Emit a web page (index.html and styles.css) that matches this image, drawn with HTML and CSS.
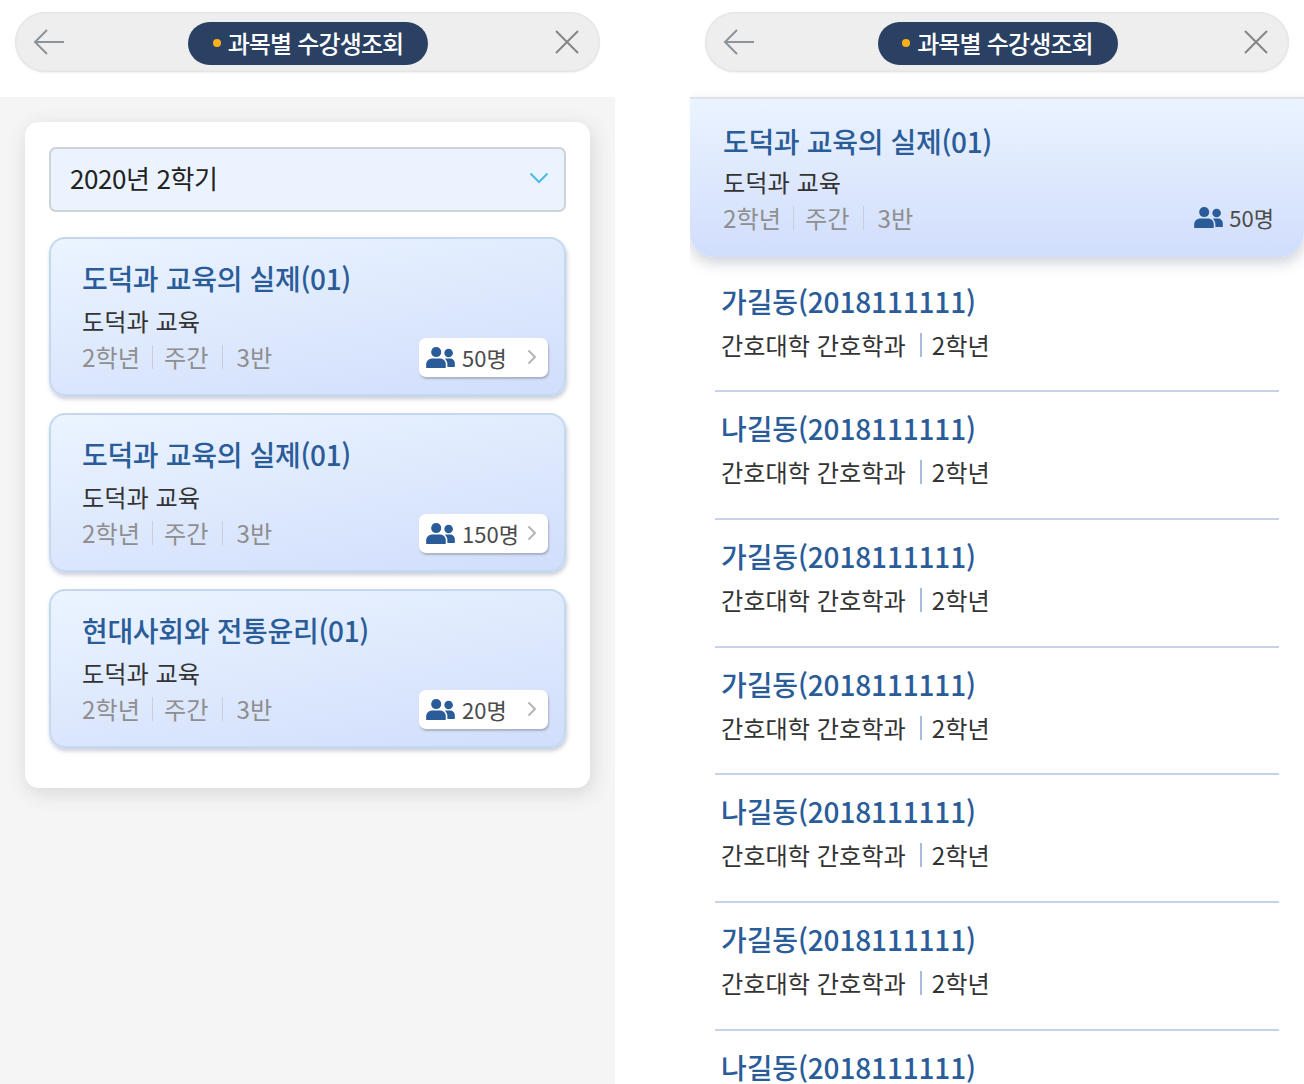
FILE: index.html
```html
<!DOCTYPE html>
<html lang="ko">
<head>
  <meta charset="UTF-8" />
  <meta name="viewport" content="width=device-width, initial-scale=1.0"/>
  <title>과목별 수강생조회</title>
  <link rel="stylesheet" href="styles.css">
</head>
<body>
  <svg class="defs" width="0" height="0">
    <symbol id="people" viewBox="0 0 30 22">
      <circle cx="10.500" cy="5.300" r="5.300"/>
      <path d="M0 22v-4c0-3.800 3.500-6 6.500-6h8c3 0 6 2.200 6 6v4z"/>
      <circle cx="23.500" cy="6.300" r="4.500"/>
      <path d="M19.500 12.300c.8-.2 1.500-.3 2.300-.3h3.200c2.800 0 5 2.200 5 5v4h-7.800v-3c0-2.300-1-4.300-2.700-5.700z"/>
    </symbol>
  </svg>

  <div class="screens">

    <!-- LEFT SCREEN -->
    <section class="screen screen-left">
      <header class="topbar-wrap">
        <div class="topbar">
          <svg class="icon-back" viewBox="0 0 32 28"><path d="M31 14H2M14 2L2 14l12 12"/></svg>
          <h1 class="pill"><span class="dot"></span>과목별 수강생조회</h1>
          <svg class="icon-close" viewBox="0 0 26 26"><path d="M2 2l22 22M24 2L2 24"/></svg>
        </div>
      </header>

      <main class="content">
        <div class="panel">
          <div class="select">
            <span>2020년 2학기</span>
            <svg class="icon-chevron" viewBox="0 0 20 12"><path d="M1.500 1.500L10 10l8.500-8.500"/></svg>
          </div>

          <article class="course">
            <h2 class="title">도덕과 교육의 실제(01)</h2>
            <p class="dept">도덕과 교육</p>
            <div class="meta-row">
              <p class="meta"><span>2학년</span><span>주간</span><span>3반</span></p>
              <a class="count-btn" href="#">
                <svg class="icon-people"><use href="#people"/></svg>
                <span class="count">50명</span>
                <svg class="icon-next" viewBox="0 0 10 16"><path d="M1.500 1.500L8 8l-6.500 6.500"/></svg>
              </a>
            </div>
          </article>

          <article class="course">
            <h2 class="title">도덕과 교육의 실제(01)</h2>
            <p class="dept">도덕과 교육</p>
            <div class="meta-row">
              <p class="meta"><span>2학년</span><span>주간</span><span>3반</span></p>
              <a class="count-btn" href="#">
                <svg class="icon-people"><use href="#people"/></svg>
                <span class="count">150명</span>
                <svg class="icon-next" viewBox="0 0 10 16"><path d="M1.500 1.500L8 8l-6.500 6.500"/></svg>
              </a>
            </div>
          </article>

          <article class="course">
            <h2 class="title">현대사회와 전통윤리(01)</h2>
            <p class="dept">도덕과 교육</p>
            <div class="meta-row">
              <p class="meta"><span>2학년</span><span>주간</span><span>3반</span></p>
              <a class="count-btn" href="#">
                <svg class="icon-people"><use href="#people"/></svg>
                <span class="count">20명</span>
                <svg class="icon-next" viewBox="0 0 10 16"><path d="M1.500 1.500L8 8l-6.500 6.500"/></svg>
              </a>
            </div>
          </article>
        </div>
      </main>
    </section>

    <!-- RIGHT SCREEN -->
    <section class="screen screen-right">
      <header class="topbar-wrap">
        <div class="topbar">
          <svg class="icon-back" viewBox="0 0 32 28"><path d="M31 14H2M14 2L2 14l12 12"/></svg>
          <h1 class="pill"><span class="dot"></span>과목별 수강생조회</h1>
          <svg class="icon-close" viewBox="0 0 26 26"><path d="M2 2l22 22M24 2L2 24"/></svg>
        </div>
      </header>

      <div class="summary">
        <h2 class="title">도덕과 교육의 실제(01)</h2>
        <p class="dept">도덕과 교육</p>
        <div class="meta-row">
          <p class="meta"><span>2학년</span><span>주간</span><span>3반</span></p>
          <div class="summary-count">
            <svg class="icon-people"><use href="#people"/></svg>
            <span class="count">50명</span>
          </div>
        </div>
      </div>

      <ul class="students">
        <li><h3 class="title">가길동(2018111111)</h3><p class="student-info"><span>간호대학 간호학과</span><span>2학년</span></p></li>
        <li><h3 class="title">나길동(2018111111)</h3><p class="student-info"><span>간호대학 간호학과</span><span>2학년</span></p></li>
        <li><h3 class="title">가길동(2018111111)</h3><p class="student-info"><span>간호대학 간호학과</span><span>2학년</span></p></li>
        <li><h3 class="title">가길동(2018111111)</h3><p class="student-info"><span>간호대학 간호학과</span><span>2학년</span></p></li>
        <li><h3 class="title">나길동(2018111111)</h3><p class="student-info"><span>간호대학 간호학과</span><span>2학년</span></p></li>
        <li><h3 class="title">가길동(2018111111)</h3><p class="student-info"><span>간호대학 간호학과</span><span>2학년</span></p></li>
        <li><h3 class="title">나길동(2018111111)</h3></li>
      </ul>
    </section>

  </div>
</body>
</html>
```

FILE: styles.css
```css
* {
  box-sizing: border-box;
}

html, body {
  margin: 0;
  padding: 0;
  height: 1084px;
  overflow: hidden;
  background-color: white;
}

body {
  font-family: "Noto Sans CJK KR", "Noto Sans", sans-serif;
  color: #333;
}

h1, h2, h3, p, ul {
  margin: 0;
  padding: 0;
  font-weight: 400;
}

.defs {
  position: absolute;
}

.screens {
  display: flex;
  justify-content: space-between;
  height: 1084px;
}

.screen {
  height: 1084px;
  display: flex;
  flex-direction: column;
  overflow: hidden;
}

.screen-left {
  width: 615px;
}

.screen-right {
  width: 614px;
}

/* ===== TOP BAR ===== */
.topbar-wrap {
  height: 97px;
  padding: 12px 15px 0;
  background-color: white;
  flex-shrink: 0;
}

.topbar {
  height: 60px;
  padding: 0 19px 0 18px;
  display: flex;
  align-items: center;
  justify-content: space-between;
  background-color: #eee;
  border-radius: 30px;
  box-shadow: inset 0 0 3px rgba(0, 0, 0, 0.1), 0 1px 2px rgba(0, 0, 0, 0.06);
}

.icon-back {
  width: 32px;
  height: 28px;
  fill: none;
  stroke: #8c939b;
  stroke-width: 2;
}

.icon-close {
  width: 26px;
  height: 26px;
  margin-right: 1px;
  fill: none;
  stroke: #858585;
  stroke-width: 2;
}

.pill {
  width: 240px;
  height: 43px;
  margin: 3px 3px 0 0;
  padding-bottom: 2px;
  display: flex;
  align-items: center;
  justify-content: center;
  gap: 7px;
  background-color: #2b4163;
  border-radius: 22px;
  color: white;
  font-size: 24px;
  font-weight: 500;
  letter-spacing: -0.85px;
}

.dot {
  width: 8px;
  height: 8px;
  border-radius: 50%;
  background-color: #fbb116;
}

/* ===== LEFT CONTENT ===== */
.content {
  flex: 1;
  padding: 25px;
  background-color: #f5f5f5;
}

.panel {
  height: 666px;
  padding: 25px 24px;
  background-color: white;
  border-radius: 14px;
  box-shadow: 2px 5px 20px rgba(60, 60, 80, 0.16);
}

.select {
  height: 65px;
  padding: 0 15px 4px 19px;
  margin-bottom: 25px;
  display: flex;
  align-items: center;
  justify-content: space-between;
  background-color: #ebf4fe;
  border: 2px solid #cfd2d6;
  border-radius: 7px;
  color: #222;
  font-size: 26px;
  letter-spacing: -0.4px;
}

.icon-chevron {
  width: 20px;
  height: 12px;
  fill: none;
  stroke: #4fb9e6;
  stroke-width: 2;
}

.course {
  height: 159px;
  padding: 19px 16px 0 31px;
  margin-bottom: 17px;
  background: linear-gradient(170deg, #ebf4ff 0%, #d1defc 100%);
  border: 2px solid #c4d8ef;
  border-radius: 16px;
  box-shadow: 1px 3px 4px rgba(70, 90, 130, 0.3);
}

/* ===== SHARED TEXT ===== */
.title {
  color: #2a5c99;
  font-size: 28px;
  font-weight: 500;
  line-height: 40px;
  letter-spacing: -0.33px;
}

.dept {
  margin-top: 5px;
  color: #333;
  font-size: 24.200px;
  line-height: 36px;
}

.meta-row {
  display: flex;
  justify-content: space-between;
  align-items: center;
  height: 36px;
}

.meta {
  display: flex;
  color: #8f8f8f;
  font-size: 24.200px;
  line-height: 36px;
}

.meta span + span {
  margin-left: 12px;
  padding-left: 12px;
  background: linear-gradient(#c9cfd8, #c9cfd8) left center / 1px 24px no-repeat;
}

.meta span:last-child {
  margin-left: 14px;
  padding-left: 14px;
}

.count-btn {
  width: 129px;
  height: 39px;
  padding: 0 9px 0 7px;
  display: flex;
  align-items: center;
  background-color: white;
  border-radius: 7px;
  box-shadow: 1px 2px 2px rgba(90, 90, 90, 0.35);
  text-decoration: none;
}

.icon-people {
  width: 29px;
  height: 21px;
  fill: #2a5c99;
  flex-shrink: 0;
}

.count {
  margin-left: 7px;
  color: #4b4b4b;
  font-size: 22px;
  line-height: 36px;
}

.icon-next {
  width: 10px;
  height: 16px;
  margin-left: auto;
  margin-right: 2px;
  fill: none;
  stroke: #b5b5b5;
  stroke-width: 2;
}

/* ===== RIGHT CONTENT ===== */
.summary {
  height: 160px;
  padding: 22px 30px 0 33px;
  flex-shrink: 0;
  background: linear-gradient(180deg, #ebf3ff 0%, #d1defc 100%);
  border-top: 2px solid #dde2e8;
  border-radius: 0 0 24px 24px;
  box-shadow: 0 6px 14px rgba(70, 80, 110, 0.25);
}

.summary .dept {
  margin-top: 3px;
}

.summary-count {
  margin-top: -2px;
  display: flex;
  align-items: center;
}

.summary-count .count {
  margin-left: 6px;
}

.students {
  list-style: none;
  padding: 0 25px;
}

.students li {
  height: 127.800px;
  padding: 16px 6px 0;
  border-bottom: 2px solid #c6d2e8;
}

.students li:first-child {
  height: 135px;
  padding-top: 24px;
}

.students .title {
  letter-spacing: -0.13px;
}

.student-info {
  display: flex;
  margin-top: 6px;
  color: #333;
  font-size: 24.200px;
  line-height: 36px;
}

.student-info span + span {
  margin-left: 14px;
  padding-left: 12px;
  background: linear-gradient(#a9bcdb, #a9bcdb) left center / 2px 24px no-repeat;
}
```
